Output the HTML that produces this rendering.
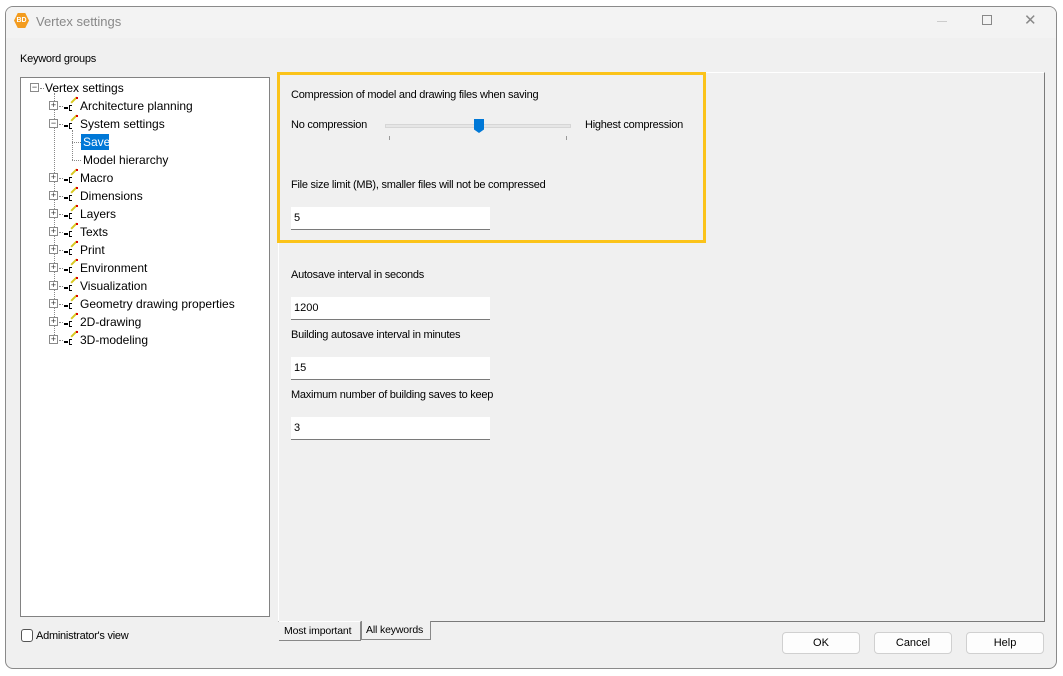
<!DOCTYPE html>
<html><head><meta charset="utf-8"><style>
*{margin:0;padding:0;box-sizing:border-box}
body{width:1063px;height:676px;background:#fff;position:relative;overflow:hidden;font-family:"Liberation Sans",sans-serif;font-size:12px;color:#000}
.a{position:absolute}
#win{left:5px;top:6px;width:1052px;height:663px;border:1px solid #8a8a8a;border-radius:8px;background:#f0f0f0;overflow:hidden}
#title{left:0;top:0;width:100%;height:31px;background:#f3f3f3}
.t{font-size:11px;letter-spacing:-0.25px;white-space:nowrap;margin-top:1px}
.tree{font-size:12px;white-space:nowrap}
.inp{background:#fff;border-bottom:1px solid #7a7a7a;width:199px;height:23px;padding:5px 0 0 3px;font-size:11px}
.btn{background:#fdfdfd;border:1px solid #d0d0d0;border-radius:4px;height:22px;width:78px;text-align:center;line-height:20px;font-size:11px}
.box{width:9px;height:9px;border:1px solid #8a8a8a;background:#fff;font-size:9px;line-height:7px;text-align:center;color:#333}
.dv{border-left:1px dotted #888}
.dh{border-top:1px dotted #888}
</style></head><body>
<div id="win" class="a">
 <div id="title" class="a"></div>
</div>
<div class="a" style="left:14px;top:13px;width:15px;height:15px;background:#f39c1f;clip-path:polygon(25% 0,75% 0,100% 50%,75% 100%,25% 100%,0 50%);color:#fff;font-size:7px;font-weight:bold;text-align:center;line-height:15px">BD</div>
<div class="a" style="left:36px;top:14px;font-size:13px;color:#888;white-space:nowrap">Vertex settings</div>
<div class="a" style="left:937px;top:21px;width:10px;border-top:1px solid #ccc"></div>
<div class="a" style="left:982px;top:15px;width:10px;height:10px;border:1px solid #888"></div>
<div class="a" style="left:1024px;top:11px;font-size:15px;color:#888">✕</div>

<div class="a t" style="left:20px;top:52px">Keyword groups</div>
<div class="a" style="left:20px;top:77px;width:250px;height:540px;background:#fff;border:1px solid #828282"></div>
<div class="a box" style="left:30px;top:83px">−</div>
<div class="a dh" style="left:40px;top:88px;width:4px"></div>
<div class="a tree" style="left:45px;top:81px">Vertex settings</div>
<div class="a dv" style="left:54px;top:93px;height:250px"></div>
<div class="a dv" style="left:72px;top:130px;height:30px"></div>
<div class="a dh" style="left:72px;top:142px;width:9px"></div>
<div class="a dh" style="left:72px;top:160px;width:9px"></div>
<div class="a" style="left:81px;top:134px;width:28px;height:16px;background:#0078d7"></div>
<div class="a tree" style="left:83px;top:135px;color:#fff">Save</div>
<div class="a tree" style="left:83px;top:153px">Model hierarchy</div>
<div id="items"></div>

<div class="a" style="left:278px;top:72px;width:767px;height:550px;border-top:1px solid #fff;border-right:1px solid #7a7a7a;border-bottom:1px solid #7a7a7a;border-left:1px solid #fff"></div>
<div class="a" style="left:277px;top:72px;width:429px;height:171px;border:3px solid #fbc31a"></div>
<div class="a t" style="left:291px;top:88px">Compression of model and drawing files when saving</div>
<div class="a t" style="left:291px;top:118px">No compression</div>
<div class="a t" style="left:585px;top:118px">Highest compression</div>
<div class="a" style="left:385px;top:124px;width:186px;height:4px;background:#e6e6e6;border:1px solid #d6d6d6"></div>
<div class="a" style="left:389px;top:136px;height:4px;border-left:1px solid #999"></div>
<div class="a" style="left:566px;top:136px;height:4px;border-left:1px solid #999"></div>
<div class="a" style="left:474px;top:119px;width:10px;height:14px;background:#0078d7;clip-path:polygon(0 0,100% 0,100% 75%,50% 100%,0 75%)"></div>
<div class="a t" style="left:291px;top:178px">File size limit (MB), smaller files will not be compressed</div>
<div class="a inp" style="left:291px;top:207px">5</div>
<div class="a t" style="left:291px;top:268px">Autosave interval in seconds</div>
<div class="a inp" style="left:291px;top:297px">1200</div>
<div class="a t" style="left:291px;top:328px">Building autosave interval in minutes</div>
<div class="a inp" style="left:291px;top:357px">15</div>
<div class="a t" style="left:291px;top:388px">Maximum number of building saves to keep</div>
<div class="a inp" style="left:291px;top:417px">3</div>

<div class="a" style="left:279px;top:621px;width:82px;height:20px;border-bottom:1px solid #888;border-right:1px solid #888;border-top:1px solid #fff;background:#f0f0f0;padding:3px 0 0 5px;font-size:10.5px;letter-spacing:-0.15px;white-space:nowrap">Most important</div>
<div class="a" style="left:361px;top:621px;width:70px;height:19px;border:1px solid #888;border-top:none;background:#f0f0f0;padding:3px 0 0 4px;font-size:10.5px;letter-spacing:-0.15px;white-space:nowrap">All keywords</div>

<div class="a" style="left:21px;top:629px;width:12px;height:13px;border:1px solid #555;border-radius:3px;background:#fff"></div>
<div class="a t" style="left:36px;top:629px">Administrator's view</div>
<div class="a btn" style="left:782px;top:632px">OK</div>
<div class="a btn" style="left:874px;top:632px">Cancel</div>
<div class="a btn" style="left:966px;top:632px">Help</div>

<script>
var it=[["Architecture planning",106,'+'],["System settings",124,'−'],["Macro",178,'+'],["Dimensions",196,'+'],["Layers",214,'+'],["Texts",232,'+'],["Print",250,'+'],["Environment",268,'+'],["Visualization",286,'+'],["Geometry drawing properties",304,'+'],["2D-drawing",322,'+'],["3D-modeling",340,'+']];
var h='';
it.forEach(function(r){var y=r[1];
h+='<div class="a box" style="left:49px;top:'+(y-5)+'px">'+r[2]+'</div>';
h+='<div class="a dh" style="left:59px;top:'+y+'px;width:4px"></div>';
h+='<div class="a" style="left:64px;top:'+(y+1)+'px;width:4px;height:2px;border-top:1px solid #000;border-bottom:1px solid #000"></div>';
h+='<div class="a" style="left:69px;top:'+(y-1)+'px;width:3px;height:6px;border-top:1px solid #000;border-bottom:1px solid #000;border-left:1px solid #000"></div>';
h+='<div class="a" style="left:70px;top:'+(y-7)+'px;width:8px;height:2px;background:#d8c820;transform:rotate(-45deg)"></div>';
h+='<div class="a" style="left:76px;top:'+(y-9)+'px;width:2px;height:2px;background:#d00"></div>';
h+='<div class="a tree" style="left:80px;top:'+(y-7)+'px">'+r[0]+'</div>';});
document.getElementById('items').innerHTML=h;
</script>
</body></html>
